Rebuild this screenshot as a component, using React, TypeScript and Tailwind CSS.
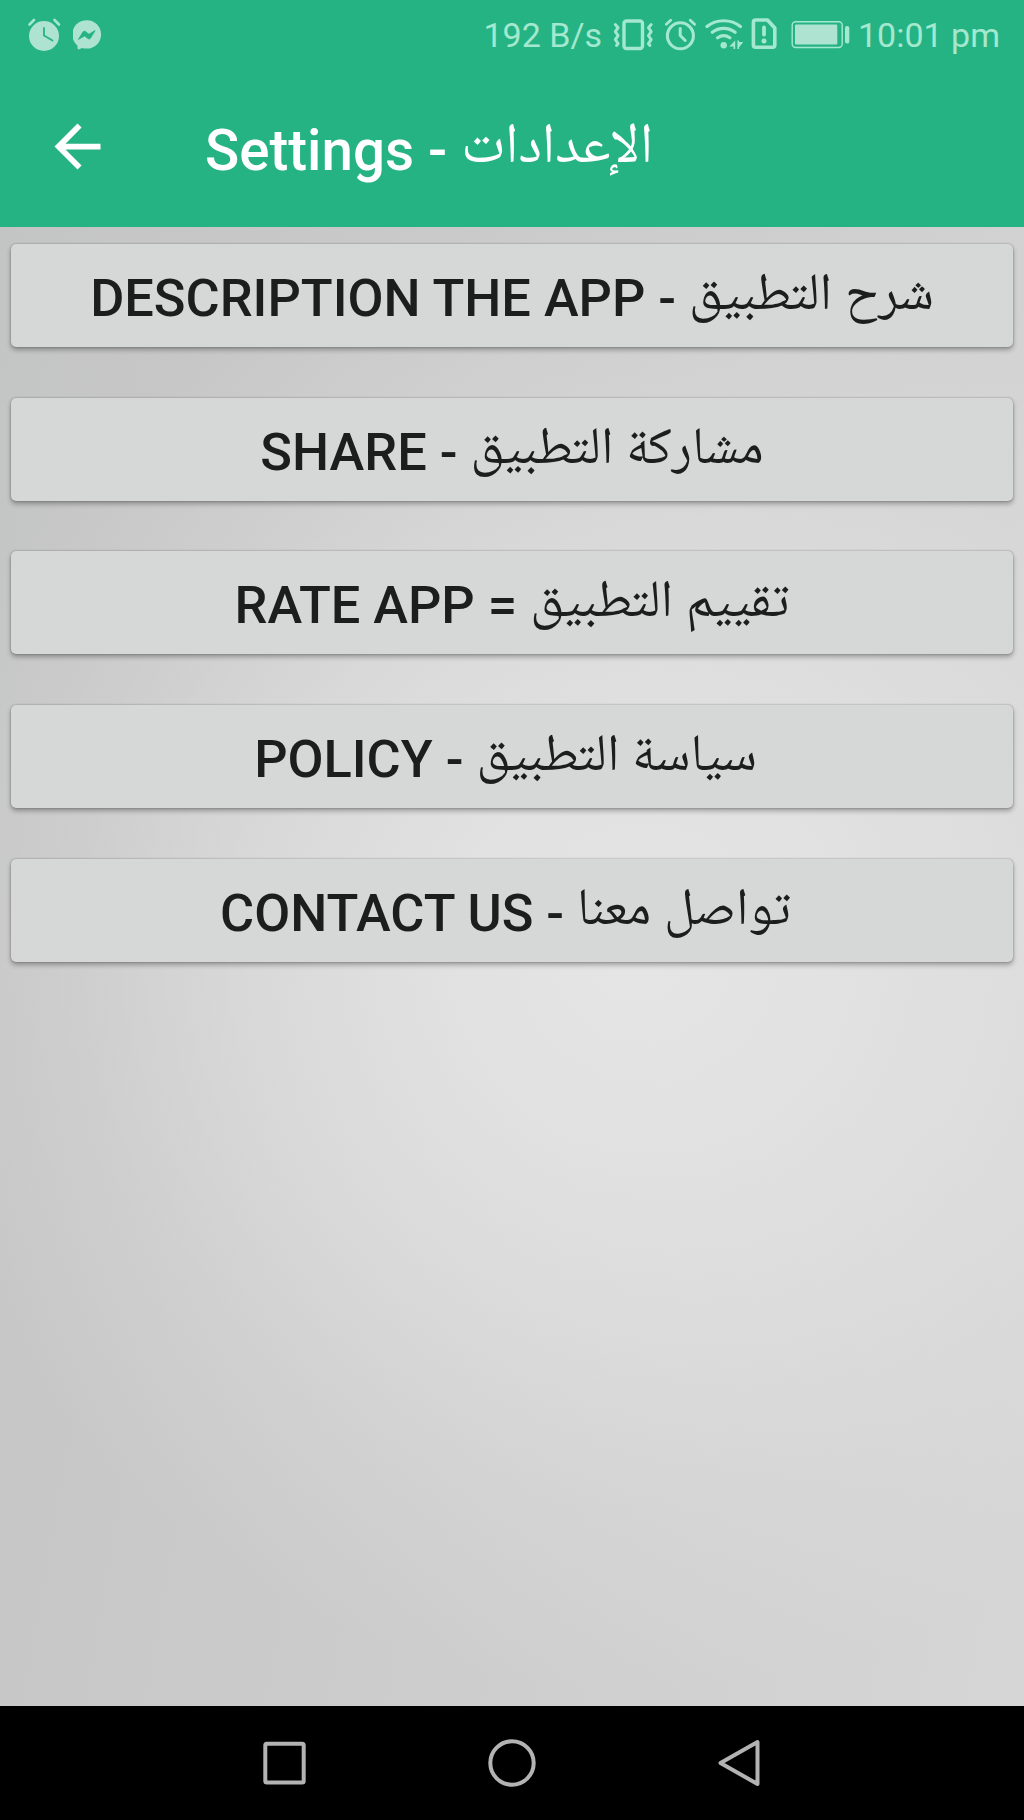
type MenuItem = {
  id: string
  latin: string
  arabic: string
  trailingSpace?: boolean
}

const menuItems: MenuItem[] = [
  { id: 'description', latin: 'Description the app -', arabic: 'شرح التطبيق' },
  { id: 'share', latin: 'Share -', arabic: 'مشاركة التطبيق' },
  { id: 'rate', latin: 'Rate app =', arabic: 'تقييم التطبيق' },
  { id: 'policy', latin: 'Policy -', arabic: 'سياسة التطبيق', trailingSpace: true },
  { id: 'contact', latin: 'Contact us -', arabic: 'تواصل معنا', trailingSpace: true },
]

function StatusBar() {
  return (
    <div className="flex h-[70px] items-start justify-between pl-[27px] pr-[24px] pt-[17px] text-[#a4e8cf]">
      <div className="flex gap-3">
        {/* Alarm */}
        <svg className="h-[35px] w-[34px]" viewBox="27 17 34 35" fill="none" stroke="currentColor" strokeLinecap="round">
          <circle cx="44" cy="36" r="15" fill="#ade3d0" stroke="none" />
          <path d="M29.5 24.5l4.5-4.5M54.5 20l4.5 4.5" strokeWidth="2.6" />
          <path d="M44 28v7.5l8.5 5" stroke="#26b384" strokeWidth="1.8" />
        </svg>
        {/* Messenger */}
        <svg className="h-[35px] w-[30px]" viewBox="73 17 30 35">
          <path d="M86.7 20.2c8.2 0 14.4 6.2 14.4 14.2s-6.2 14.2-14.4 14.2c-1.7 0-3.2-.2-4.6-.6l-3.4 1.6-1.1-.8-.2-3.4c-3.3-2.7-5.1-6.5-5.1-11 0-8 6.2-14.2 14.4-14.2z" fill="#ade3d0" />
          <path d="M78.4 39.4l4.5-7.3c.7-1 1.7-1.2 2.6-.5l3.4 2.6 6.2-3.6-4.5 7.4c-.7 1-1.8 1.2-2.7.5l-3.3-2.6z" fill="#26b384" stroke="#26b384" strokeWidth=".8" />
        </svg>
      </div>

      <div className="flex text-[34px] leading-[35px]">
        <span className="pt-px">192 B/s</span>
        {/* Vibrate */}
        <svg className="ml-[10px] h-[35px] w-[43px]" viewBox="612 17 43 35" fill="none" stroke="currentColor" strokeLinejoin="round" strokeLinecap="round">
          <rect x="624" y="21" width="18.5" height="27.5" rx="2.5" strokeWidth="3.4" />
          <path d="M615.3 24.5l2.8 3.2-2.8 4 2.8 4-2.8 4 2.8 4-1.6 1.8M651.2 24.5l-2.8 3.2 2.8 4-2.8 4 2.8 4-2.8 4 1.6 1.8" strokeWidth="2.9" />
        </svg>
        {/* Alarm outline */}
        <svg className="ml-[9px] h-[35px] w-[33px]" viewBox="664 17 33 35" fill="none" stroke="currentColor" strokeLinecap="round" strokeLinejoin="round">
          <circle cx="680.4" cy="35.8" r="13" strokeWidth="3.1" />
          <path d="M666.3 24.3l4.4-4M690.2 20.3l4.4 4" strokeWidth="2.8" />
          <path d="M680.2 28.5v7l5 5" strokeWidth="3" />
        </svg>
        {/* Wi-Fi with traffic arrows */}
        <svg className="ml-[8px] h-[35px] w-[38px]" viewBox="705 17 38 35" fill="none" stroke="currentColor" strokeLinecap="round" strokeWidth="3.2">
          <path d="M707 26.6c9.4-7.8 24-7.8 33.4 0M712.3 32.2c6.6-5.2 16.2-5.2 22.8 0M717.6 37.8c3.7-2.6 8.5-2.6 12.2 0" />
          <circle cx="723.7" cy="45.2" r="3.2" fill="currentColor" stroke="none" />
          <path d="M735.2 40.5V49h-1.7v-2.6h-4.2zM737.4 49v-8.5h1.6v1.6h4.2L739 47.6V49z" fill="currentColor" stroke="none" />
        </svg>
        {/* SIM warning */}
        <svg className="ml-[8px] h-[35px] w-[26px]" viewBox="751 17 26 35" fill="none" stroke="currentColor" strokeLinejoin="round">
          <path d="M755.6 20h11.9l7.3 8v17c0 1.3-.9 2.2-2.2 2.2h-17c-1.3 0-2.2-.9-2.2-2.2V22.2c0-1.3.9-2.2 2.2-2.2z" strokeWidth="3.6" />
          <path d="M764 27.5v7" strokeWidth="3.8" strokeLinecap="round" />
          <circle cx="764" cy="41" r="2.5" fill="currentColor" stroke="none" />
        </svg>
        {/* Battery */}
        <svg className="ml-[14px] h-[35px] w-[59px]" viewBox="791 17 59 35">
          <rect x="792.2" y="21.7" width="50" height="25.8" rx="3.5" fill="none" stroke="currentColor" strokeWidth="1.4" />
          <rect x="795" y="24.5" width="42.3" height="20" rx="1.2" fill="#ade3d0" />
          <rect x="845" y="26" width="4.3" height="17.5" rx="2" fill="currentColor" />
        </svg>
        <span className="ml-2 pt-px">10:01 pm</span>
      </div>
    </div>
  )
}

function NavigationBar() {
  return (
    <nav className="flex h-[114px] shrink-0 items-center justify-between bg-black px-[260px] text-[#b3b3b3]">
      <svg className="h-12 w-12" viewBox="0 0 48 48" fill="none" stroke="currentColor" strokeWidth="4">
        <rect x="5.3" y="4.7" width="38.4" height="38.8" rx="1.5" />
      </svg>
      <svg className="h-12 w-12" viewBox="0 0 48 48" fill="none" stroke="currentColor" strokeWidth="4">
        <circle cx="24" cy="24" r="21.7" />
      </svg>
      <svg className="h-12 w-12" viewBox="0 0 48 48" fill="none" stroke="currentColor" strokeWidth="4" strokeLinejoin="round">
        <path d="M41.5 3L4.5 24l37 21z" />
      </svg>
    </nav>
  )
}

export default function App() {
  return (
    <div className="flex h-[1820px] w-[1024px] flex-col overflow-hidden font-[Roboto,'Noto_Naskh_Arabic','DejaVu_Sans',sans-serif]">
      <header className="h-[227px] shrink-0 bg-[#26b384]">
        <StatusBar />
        <div className="flex h-[157px] items-start pl-[43px] pt-[42px] text-white">
          <svg className="h-[69px] w-[69px]" viewBox="0 0 24 24" fill="currentColor">
            <path d="M20 11H7.83l5.59-5.59L12 4l-8 8 8 8 1.41-1.41L7.83 13H20v-2z" />
          </svg>
          <h1 className="ml-[93px] h-[69px] whitespace-nowrap text-[56.5px] leading-[78px] font-medium">
            Settings - <span className="align-[8px] text-[56.5px] leading-none font-normal">الإعدادات</span>
          </h1>
        </div>
      </header>

      <main className="flex grow flex-col gap-[50.6px] bg-[radial-gradient(ellipse_740px_740px_at_62%_49%,#e5e5e5_0%,#e5e5e5d9_25%,#e5e5e594_50%,#e5e5e53d_75%,#e5e5e500_100%),linear-gradient(100deg,#c3c5c4_0%,#c6c6c6_12%,#cccccc_50%,#d5d6d5_100%)] px-[11.3px] pt-[17.3px]">
        {menuItems.map((item) => (
          <button
            key={item.id}
            type="button"
            className="h-[103px] shrink-0 whitespace-pre rounded-[5px] bg-[#d6d8d7] pt-[5px] text-[52.3px] leading-[96px] font-medium text-[#1c1d1d] uppercase shadow-[0_3px_5px_rgba(0,0,0,0.3),0_0_2px_rgba(0,0,0,0.35)]"
          >
            {item.latin} <span className="align-[7px] text-[52.3px] leading-none font-normal">{item.arabic}</span>
            {item.trailingSpace && ' '}
          </button>
        ))}
      </main>

      <NavigationBar />
    </div>
  )
}
